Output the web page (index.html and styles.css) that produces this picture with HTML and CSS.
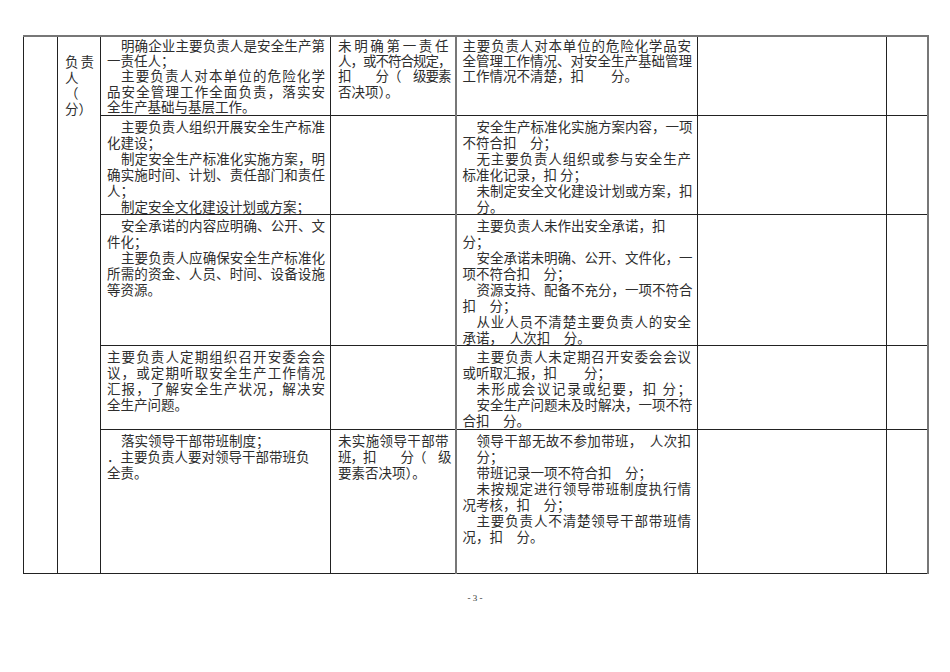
FILE: index.html
```html
<!DOCTYPE html>
<html lang="zh">
<head>
<meta charset="utf-8">
<title>安全生产标准化</title>
<link rel="stylesheet" href="styles.css">
</head>
<body>
<div class="page">
  <table class="grid">
    <colgroup>
      <col class="c1"><col class="c2"><col class="c3"><col class="c4"><col class="c5"><col class="c6"><col class="c7">
    </colgroup>
    <tr class="r1">
      <td rowspan="5" class="blank"></td>
      <td rowspan="5" class="who">
        <div class="l f">负责</div>
        <div class="l">人</div>
        <div class="l">（</div>
        <div class="l">分）</div>
      </td>
      <td class="req">
        <div class="l f i">明确企业主要负责人是安全生产第</div>
        <div class="l">一责任人；</div>
        <div class="l f i">主要负责人对本单位的危险化学</div>
        <div class="l f">品安全管理工作全面负责，落实安</div>
        <div class="l">全生产基础与基层工作。</div>
      </td>
      <td class="veto">
        <div class="l f">未明确第一责任</div>
        <div class="l f c">人，或不符合规定，</div>
        <div class="l f c">扣　　分（　级要素</div>
        <div class="l">否决项）。</div>
      </td>
      <td class="score">
        <div class="l f">主要负责人对本单位的危险化学品安</div>
        <div class="l f">全管理工作情况、对安全生产基础管理</div>
        <div class="l">工作情况不清楚，扣　　分。</div>
      </td>
      <td class="gap"></td>
      <td class="end"></td>
    </tr>
    <tr class="r2">
      <td class="req">
        <div class="l f i">主要负责人组织开展安全生产标准</div>
        <div class="l">化建设；</div>
        <div class="l f i">制定安全生产标准化实施方案，明</div>
        <div class="l f">确实施时间、计划、责任部门和责任</div>
        <div class="l">人；</div>
        <div class="l i">制定安全文化建设计划或方案；</div>
      </td>
      <td class="veto"></td>
      <td class="score">
        <div class="l f i">安全生产标准化实施方案内容，一项</div>
        <div class="l">不符合扣　分；</div>
        <div class="l f i">无主要负责人组织或参与安全生产</div>
        <div class="l">标准化记录，扣 分；</div>
        <div class="l f i">未制定安全文化建设计划或方案，扣</div>
        <div class="l i">分。</div>
      </td>
      <td class="gap"></td>
      <td class="end"></td>
    </tr>
    <tr class="r3">
      <td class="req">
        <div class="l f i">安全承诺的内容应明确、公开、文</div>
        <div class="l">件化；</div>
        <div class="l f i">主要负责人应确保安全生产标准化</div>
        <div class="l f">所需的资金、人员、时间、设备设施</div>
        <div class="l">等资源。</div>
      </td>
      <td class="veto"></td>
      <td class="score">
        <div class="l i">主要负责人未作出安全承诺，扣</div>
        <div class="l">分；</div>
        <div class="l f i">安全承诺未明确、公开、文件化，一</div>
        <div class="l">项不符合扣　分；</div>
        <div class="l f i">资源支持、配备不充分，一项不符合</div>
        <div class="l">扣　分；</div>
        <div class="l f i">从业人员不清楚主要负责人的安全</div>
        <div class="l">承诺，　人次扣　分。</div>
      </td>
      <td class="gap"></td>
      <td class="end"></td>
    </tr>
    <tr class="r4">
      <td class="req">
        <div class="l f">主要负责人定期组织召开安委会会</div>
        <div class="l f">议，或定期听取安全生产工作情况</div>
        <div class="l f">汇报，了解安全生产状况，解决安</div>
        <div class="l">全生产问题。</div>
      </td>
      <td class="veto"></td>
      <td class="score">
        <div class="l f i">主要负责人未定期召开安委会会议</div>
        <div class="l">或听取汇报，扣　　分；</div>
        <div class="l f i">未形成会议记录或纪要，扣 分；</div>
        <div class="l f i">安全生产问题未及时解决，一项不符</div>
        <div class="l">合扣　分。</div>
      </td>
      <td class="gap"></td>
      <td class="end"></td>
    </tr>
    <tr class="r5">
      <td class="req">
        <div class="l i">落实领导干部带班制度；</div>
        <div class="l">．主要负责人要对领导干部带班负</div>
        <div class="l">全责。</div>
      </td>
      <td class="veto">
        <div class="l f">未实施领导干部带</div>
        <div class="l f c">班，扣　　分（　级</div>
        <div class="l">要素否决项）。</div>
      </td>
      <td class="score">
        <div class="l f i">领导干部无故不参加带班，　人次扣</div>
        <div class="l i">分；</div>
        <div class="l i">带班记录一项不符合扣　分；</div>
        <div class="l f i">未按规定进行领导带班制度执行情</div>
        <div class="l">况考核，扣　分；</div>
        <div class="l f i">主要负责人不清楚领导干部带班情</div>
        <div class="l">况，扣　分。</div>
      </td>
      <td class="gap"></td>
      <td class="end"></td>
    </tr>
  </table>
  <div class="folio">- 3 -</div>
</div>
</body>
</html>
```

FILE: styles.css
```css
html, body {
  margin: 0;
  padding: 0;
  background: #ffffff;
}

.page {
  width: 950px;
  height: 672px;
  padding: 35px 0 0 23px;
  box-sizing: border-box;
  font-family: "Noto Sans CJK SC", "Liberation Serif", serif;
  font-size: 13.5px;
  line-height: 16px;
  color: #2e2e2e;
}

.grid {
  width: 904px;
  table-layout: fixed;
  border-collapse: collapse;
  border-top: 2px solid #777;
  border-right: 2px solid #777;
  border-bottom: 1px solid #222;
  border-left: 1px solid #222;
}

.c1 { width: 34px; }
.c2 { width: 43px; }
.c3 { width: 230px; }
.c4 { width: 125px; }
.c5 { width: 242px; }
.c6 { width: 189px; }
.c7 { width: 41px; }

.grid td {
  border: 1px solid #222;
  vertical-align: top;
  padding: 2px 5px 0 6px;
  overflow: hidden;
}

.grid tr + tr td {
  border-top: 1px solid #555;
}

.r1 { height: 79px; }
.r2 { height: 99px; }
.r3 { height: 131px; }
.r4 { height: 84px; }
.r5 { height: 144px; }

.r1 td {
  line-height: 15.2px;
  padding-top: 1px;
}

.grid td.who {
  padding: 17px 6px 0 7px;
  line-height: 15.5px;
}

.grid td.veto {
  padding-left: 7px;
  padding-right: 6px;
  border-right: 2px solid #777;
}

.grid td.score {
  padding-right: 6px;
}

.l {
  white-space: nowrap;
}

.f {
  text-align: justify;
  text-align-last: justify;
}

.i {
  padding-left: 14px;
}

.c {
  letter-spacing: -1px;
}

.folio {
  width: 904px;
  margin-top: 19px;
  text-align: center;
  font-family: "Liberation Serif", serif;
  font-size: 9px;
  line-height: 10px;
  color: #333;
}
```
